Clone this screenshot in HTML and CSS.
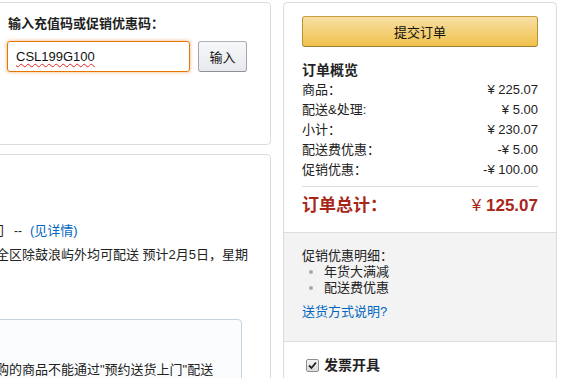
FILE: index.html
```html
<!DOCTYPE html>
<html lang="zh-CN">
<head>
<meta charset="utf-8">
<title>提交订单</title>
<link rel="stylesheet" href="styles.css">
</head>
<body>
<div class="page">
  <div class="left">
    <section class="panel code-panel">
      <div class="code-label">输入充值码或促销优惠码：</div>
      <div class="code-row">
        <div class="code-input" role="textbox"><span class="spell">CSL199G100</span></div>
        <button class="btn-grey" type="button">输入</button>
      </div>
    </section>
    <section class="panel ship-panel">
      <p class="ship-line ship-first">送货上门<span class="sep">--</span><a href="#" class="link">(见详情)</a></p>
      <p class="ship-line">厦门市全区除鼓浪屿外均可配送 预计2月5日，星期三</p>
      <div class="notice">
        <p class="notice-text">您所选购的商品不能通过"预约送货上门"配送</p>
      </div>
    </section>
  </div>

  <aside class="panel summary">
    <div class="summary-top">
      <button class="btn-yellow" type="button">提交订单</button>
      <h3 class="summary-title">订单概览</h3>
      <div class="row"><span>商品：</span><span>¥ 225.07</span></div>
      <div class="row"><span>配送&amp;处理:</span><span>¥ 5.00</span></div>
      <div class="row"><span>小计：</span><span>¥ 230.07</span></div>
      <div class="row"><span>配送费优惠：</span><span>-¥ 5.00</span></div>
      <div class="row"><span>促销优惠：</span><span>-¥ 100.00</span></div>
      <div class="divider"></div>
      <div class="total"><span class="total-label">订单总计：</span><span class="total-amount"><span class="yen">¥</span> 125.07</span></div>
    </div>
    <div class="summary-promo">
      <div class="promo-title">促销优惠明细：</div>
      <ul class="promo-list">
        <li>年货大满减</li>
        <li>配送费优惠</li>
      </ul>
      <a href="#" class="link promo-link">送货方式说明?</a>
    </div>
    <div class="summary-invoice">
      <span class="checkbox"><svg width="9" height="9" viewBox="0 0 9 9"><path d="M1 4.5 L3.5 7 L8 1.5" fill="none" stroke="#222" stroke-width="1.8"/></svg></span>
      <span class="invoice-label">发票开具</span>
    </div>
  </aside>
</div>
</body>
</html>
```

FILE: styles.css
```css
html, body {
  margin: 0;
  padding: 0;
  background: #fff;
  overflow: hidden;
}
body {
  font-family: "Liberation Sans", "Noto Sans CJK SC", sans-serif;
  font-size: 13px;
  color: #111;
}
.page {
  display: flex;
  align-items: flex-start;
  padding-top: 2px;
  height: 376px;
  overflow: hidden;
}
.left {
  margin-left: -120px;
  width: 391px;
  flex: none;
  display: flex;
  flex-direction: column;
}
.panel {
  border: 1px solid #dcdcdc;
  border-radius: 4px;
  background: #fff;
  box-sizing: border-box;
}
.code-panel {
  height: 143px;
  padding: 12px 0 0 127px;
}
.code-label {
  font-weight: bold;
  font-size: 13px;
  line-height: 18px;
  color: #222;
}
.code-row {
  display: flex;
  gap: 8px;
  margin-top: 8px;
  margin-left: -1px;
}
.code-input {
  box-sizing: border-box;
  width: 183px;
  height: 31px;
  border: 1px solid #e77600;
  border-radius: 3px;
  box-shadow: 0 0 3px 1px rgba(228, 121, 17, 0.35);
  padding-left: 8px;
  line-height: 29px;
  font-size: 13px;
  color: #111;
}
.spell {
  text-decoration: underline wavy #e02020;
  text-decoration-thickness: 1px;
  text-underline-offset: 2px;
}
.btn-grey {
  box-sizing: border-box;
  width: 49px;
  height: 31px;
  border: 1px solid #adb1b8;
  border-color: #adb1b8 #a2a6ac #8d9096;
  border-radius: 3px;
  background: linear-gradient(#f7f8fa, #e7e9ec);
  font-family: "Noto Sans CJK SC", sans-serif;
  font-size: 13px;
  color: #111;
  padding: 0;
}
.ship-panel {
  margin-top: 9px;
  height: 232px;
  padding: 64px 20px 0 76px;
}
.ship-line {
  margin: 0;
  line-height: 23px;
  font-size: 13px;
  color: #222;
}
.ship-first {
  margin-left: -5px;
}
.sep {
  font-size: 12px;
  margin: 0 8px 0 10px;
}
.link {
  color: #0066c0;
  text-decoration: none;
}
.notice {
  margin-top: 30px;
  margin-left: -60px;
  margin-right: 8px;
  height: 70px;
  box-sizing: border-box;
  border: 1px solid #c6d3dd;
  border-radius: 4px;
  background: #fbfcfd;
  padding: 38px 0 0 59px;
}
.notice-text {
  margin: 0;
  line-height: 23px;
  color: #222;
  white-space: nowrap;
}
.summary {
  margin-left: 12px;
  width: 274px;
  flex: none;
  height: 380px;
  overflow: hidden;
}
.summary-top {
  padding: 13px 18px 14px;
}
.btn-yellow {
  display: block;
  box-sizing: border-box;
  width: 100%;
  height: 31px;
  border: 1px solid #a88734;
  border-color: #c89f3d #b8912e #9c7e31;
  border-radius: 3px;
  background: linear-gradient(#f7dfa5, #f0c14b);
  font-family: "Noto Sans CJK SC", sans-serif;
  font-size: 13px;
  color: #111;
  padding: 0;
}
.summary-title {
  margin: 13px 0 0;
  font-size: 14px;
  font-weight: bold;
  line-height: 20px;
  color: #222;
}
.row {
  display: flex;
  justify-content: space-between;
  line-height: 20px;
  color: #222;
}
.divider {
  height: 1px;
  background: #dddddd;
  margin-top: 6px;
}
.total {
  display: flex;
  justify-content: space-between;
  margin-top: 7px;
  line-height: 24px;
  color: #a8271a;
  font-weight: bold;
  font-size: 17px;
}
.total-amount {
  font-size: 17px;
}
.yen {
  font-weight: normal;
}
.summary-promo {
  background: #f3f3f3;
  border-top: 1px solid #dddddd;
  border-bottom: 1px solid #dddddd;
  padding: 15px 18px 21px;
  height: 110px;
  box-sizing: border-box;
}
.promo-title {
  line-height: 16px;
  color: #222;
}
.promo-list {
  margin: 0;
  padding: 0 0 0 22px;
  line-height: 16px;
  color: #222;
}
.promo-list li::marker {
  color: #aaa;
}
.promo-link {
  display: block;
  margin-top: 8px;
  line-height: 16px;
}
.summary-invoice {
  display: flex;
  align-items: center;
  gap: 5px;
  padding: 13px 0 0 22px;
  line-height: 20px;
}
.checkbox {
  width: 11px;
  height: 11px;
  border: 1px solid #8f8f8f;
  border-radius: 2px;
  background: linear-gradient(#f4f4f4, #dcdcdc);
  display: flex;
  align-items: center;
  justify-content: center;
}
.invoice-label {
  font-weight: bold;
  font-size: 14px;
  color: #222;
}
```
